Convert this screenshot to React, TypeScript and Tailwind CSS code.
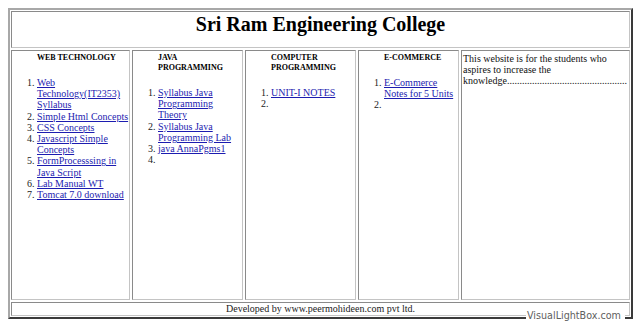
import React from 'react'

interface Column {
    title: string[]
    links: string[]
    blanks: number
}

const columns: Column[] = [
    {
        title: ['WEB TECHNOLOGY'],
        links: [
            'Web Technology(IT2353) Syllabus',
            'Simple Html Concepts',
            'CSS Concepts',
            'Javascript Simple Concepts',
            'FormProcesssing in Java Script',
            'Lab Manual WT',
            'Tomcat 7.0 download',
        ],
        blanks: 0,
    },
    {
        title: ['JAVA', 'PROGRAMMING'],
        links: ['Syllabus Java Programming Theory', 'Syllabus Java Programming Lab', 'java AnnaPgms1'],
        blanks: 1,
    },
    {
        title: ['COMPUTER', 'PROGRAMMING'],
        links: ['UNIT-I NOTES'],
        blanks: 1,
    },
    {
        title: ['E-COMMERCE'],
        links: ['E-Commerce Notes for 5 Units'],
        blanks: 1,
    },
]

const serif = "font-['Liberation_Serif','Times_New_Roman',serif]"

const cell = 'border border-t-[#8a8a8a] border-l-[#8a8a8a] border-r-[#c4c4c4] border-b-[#c4c4c4] bg-white'

const App = () => {
    return (
        <div className={`relative w-[640px] h-[324px] bg-white text-black ${serif}`}>
            <div className="absolute left-[8px] top-[8px] w-[625px] h-[311px] border-2 border-t-[#a8a8a8] border-l-[#a8a8a8] border-r-[#3a3a3a] border-b-[#3a3a3a] p-px">
                <div className="grid grid-cols-[119px_111px_111px_101px_169px] grid-rows-[37px_250px_14px] gap-[2px]">
                    <div className={`${cell} col-span-5 text-center pt-[1px]`}>
                        <h1 className="text-[20px] leading-[23px] font-bold">Sri Ram Engineering College</h1>
                    </div>

                    {columns.map((col) => (
                        <div key={col.title.join(' ')} className={`${cell} pt-[2px] pl-[25px] text-[10px] leading-[11.2px]`}>
                            <h5 className="text-[8px] leading-[10px] font-bold uppercase">
                                {col.title.map((line) => (
                                    <div key={line}>{line}</div>
                                ))}
                            </h5>
                            <ol className="list-decimal mt-[14px] marker:text-[#222]">
                                {col.links.map((link) => (
                                    <li key={link}>
                                        <a href="#" className="text-[#1c1cb0] underline">
                                            {link}
                                        </a>
                                    </li>
                                ))}
                                {Array.from({ length: col.blanks }).map((_, i) => (
                                    <li key={i} className="text-[#1c1cb0] h-[11.2px]"></li>
                                ))}
                            </ol>
                        </div>
                    ))}

                    <div className={`${cell} p-px pt-[1.5px] text-[10px] leading-[11px] overflow-hidden text-[#111]`}>
                        <p>This website is for the students who aspires to increase the</p>
                        <p className="whitespace-nowrap">knowledge{'.'.repeat(48)}</p>
                    </div>

                    <div className={`${cell} col-span-5 text-center text-[10px] leading-[12px] text-[#222]`}>
                        Developed by www.peermohideen.com pvt ltd.
                    </div>
                </div>
            </div>

            <div className="absolute left-[526px] top-[309px] bg-white pl-px pr-[4px] text-[9.6px] leading-[13px] text-[#606060] font-['DejaVu_Sans',sans-serif]">
                VisualLightBox.com
            </div>
        </div>
    )
}

export default App
